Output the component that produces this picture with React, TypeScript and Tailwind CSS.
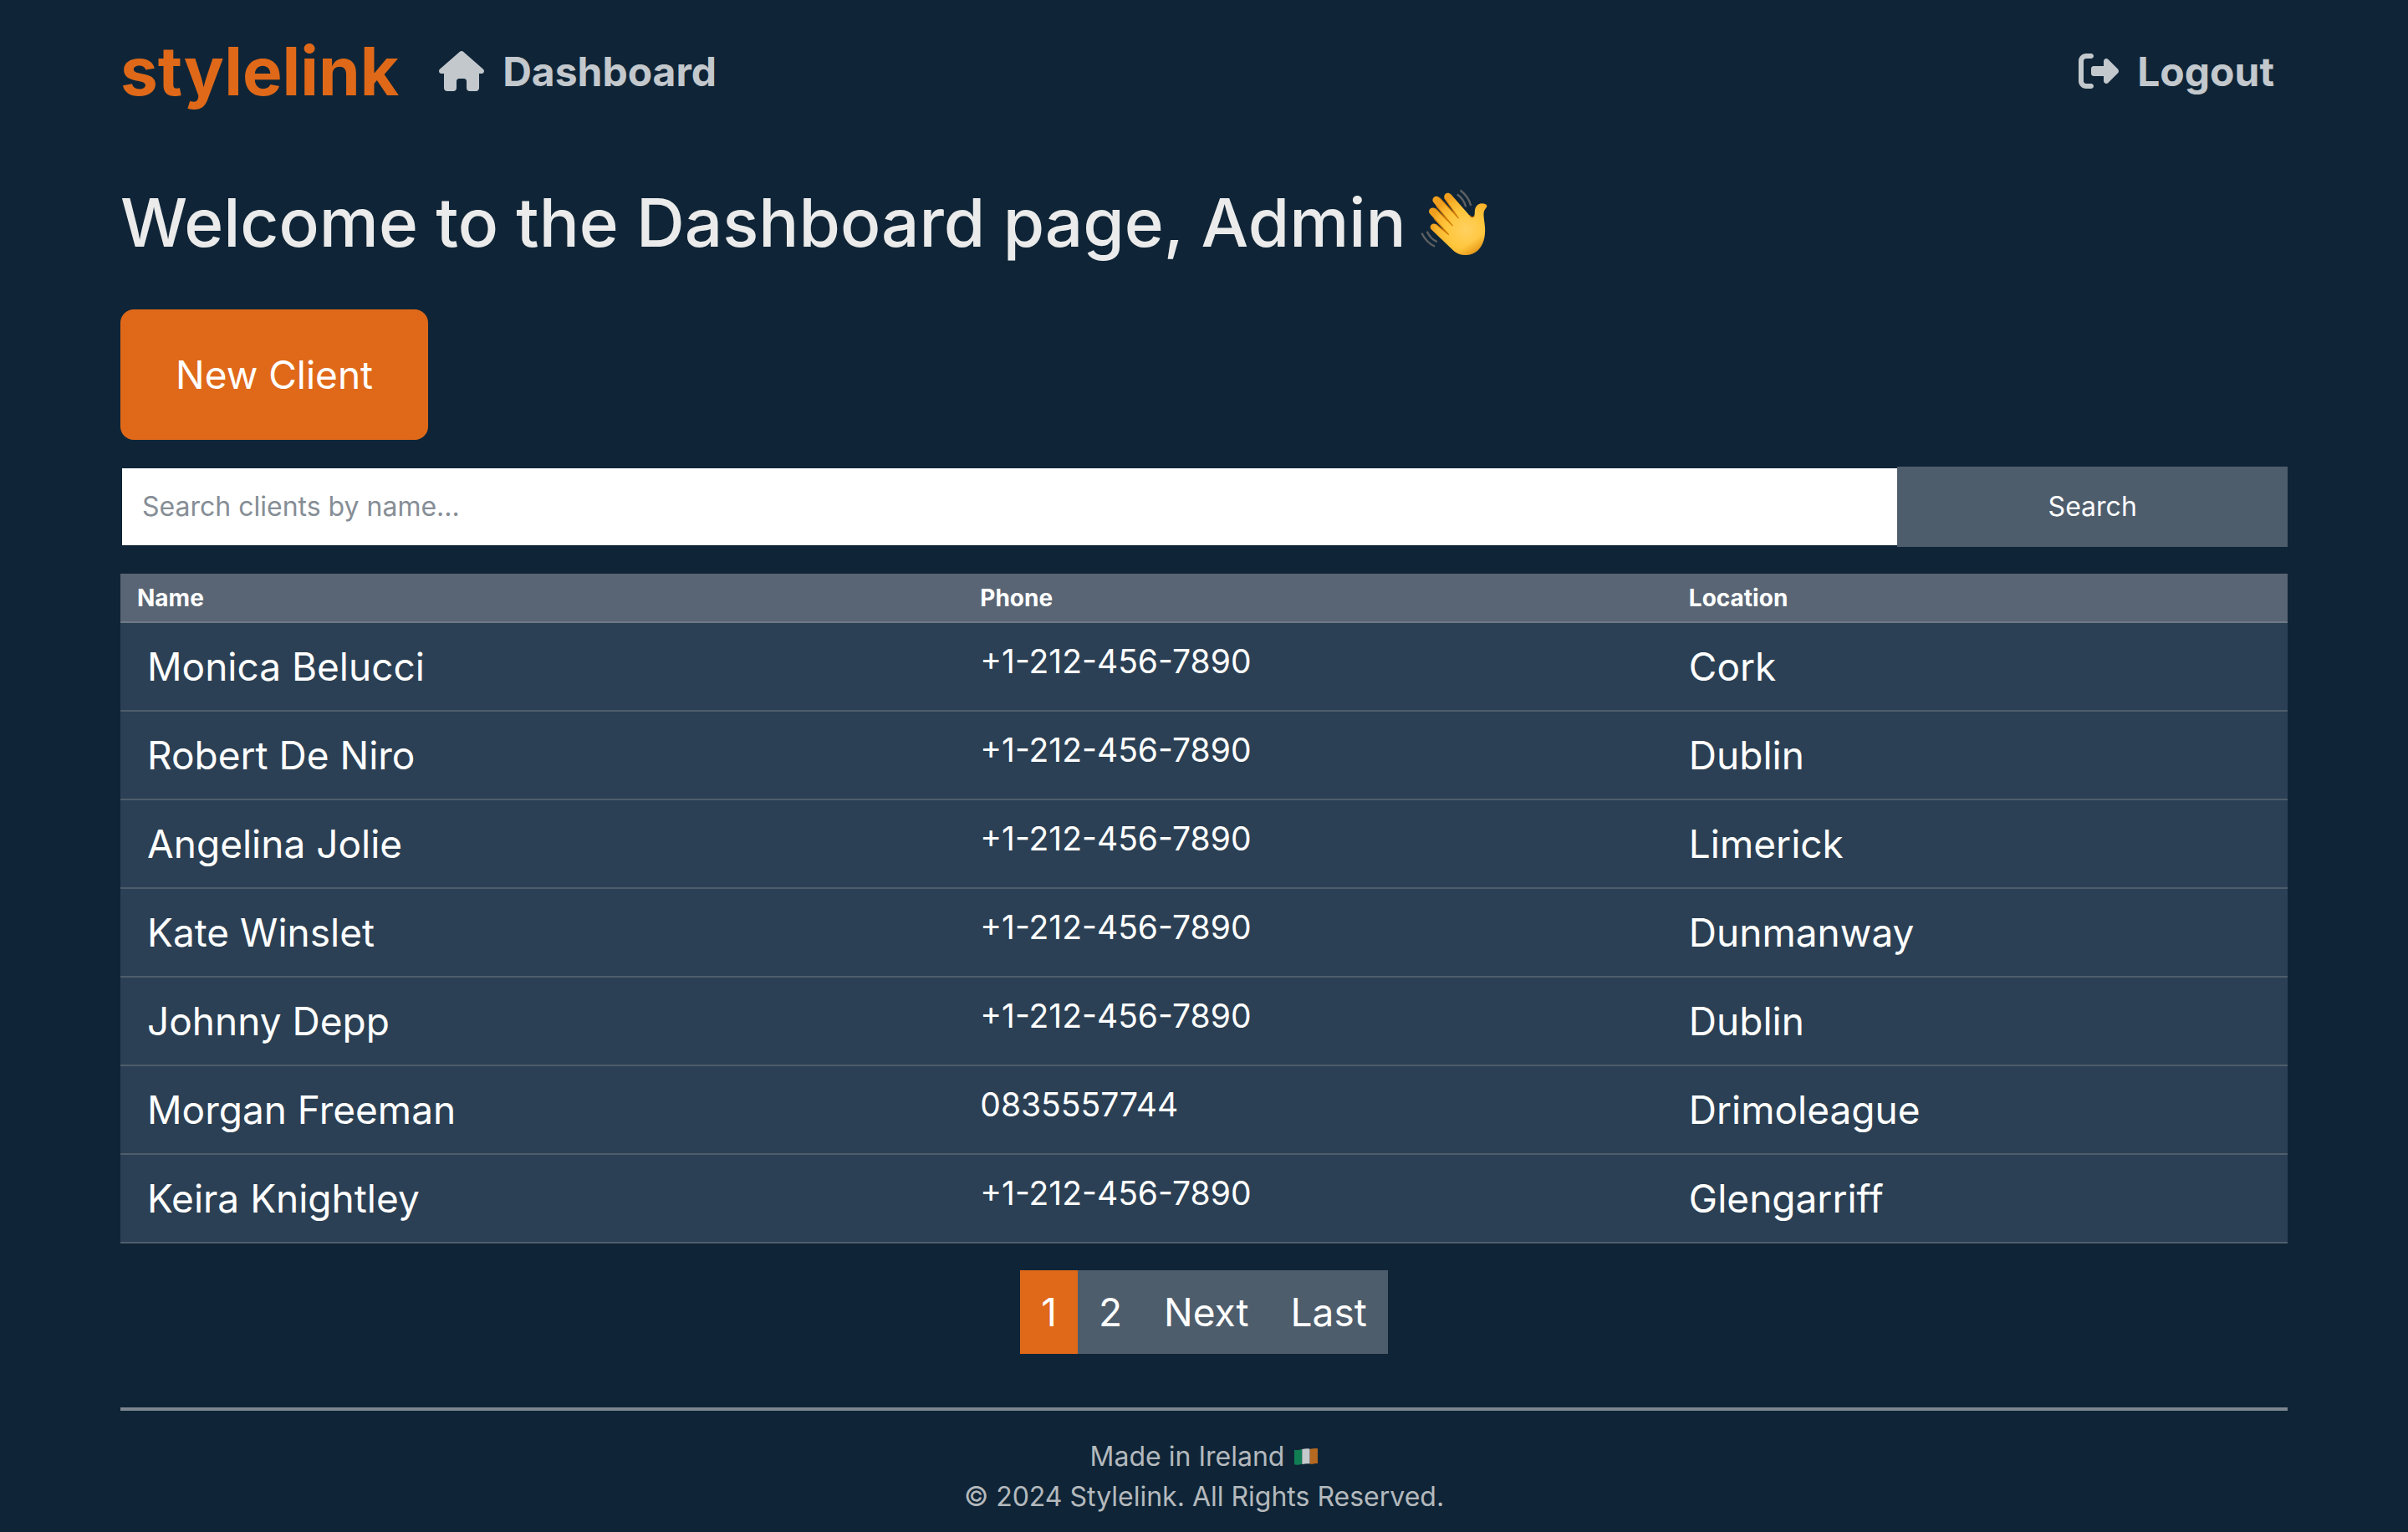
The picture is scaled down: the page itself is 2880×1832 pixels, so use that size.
import React from "react";
import { FaHouse, FaRightFromBracket } from "react-icons/fa6";

type Client = { name: string; phone: string; location: string };

const clients: Client[] = [
  { name: "Monica Belucci", phone: "+1-212-456-7890", location: "Cork" },
  { name: "Robert De Niro", phone: "+1-212-456-7890", location: "Dublin" },
  { name: "Angelina Jolie", phone: "+1-212-456-7890", location: "Limerick" },
  { name: "Kate Winslet", phone: "+1-212-456-7890", location: "Dunmanway" },
  { name: "Johnny Depp", phone: "+1-212-456-7890", location: "Dublin" },
  { name: "Morgan Freeman", phone: "0835557744", location: "Drimoleague" },
  { name: "Keira Knightley", phone: "+1-212-456-7890", location: "Glengarriff" },
];

const pages = ["1", "2", "Next", "Last"];

function WavingHand() {
  return (
    <svg viewBox="180 78 245 242" className="size-[82px] shrink-0" role="img" aria-label="Waving hand">
      <defs>
        <radialGradient id="palm" gradientUnits="userSpaceOnUse" cx="345" cy="225" r="125">
          <stop offset="0" stopColor="#ffd160" />
          <stop offset="0.55" stopColor="#ffc63c" />
          <stop offset="0.85" stopColor="#f9b42c" />
          <stop offset="1" stopColor="#f0a01e" />
        </radialGradient>
        <linearGradient id="edge" gradientUnits="userSpaceOnUse" x1="330" y1="230" x2="385" y2="312">
          <stop offset="0.5" stopColor="#e08a10" stopOpacity="0" />
          <stop offset="1" stopColor="#d87f0c" stopOpacity="0.75" />
        </linearGradient>
      </defs>
      <g fill="none" stroke="#5f6063" strokeWidth="7">
        <path d="M325 84C343 98 357 116 363 139" />
        <path d="M314 99C330 110 340 124 345 143" />
        <path d="M187 237C198 259 213 275 234 285" />
        <path d="M206 231C214 248 224 261 242 268" />
      </g>
      <path
        d="M269 113C262 100 279 86 292 99L358 174C364 181 370 183 374 177C379 168 374 157 380 145C387 131 403 129 414 133C423 137 421 143 415 150C403 166 411 185 413 215C416 252 406 289 378 306C354 320 325 319 303 302L221 224C211 212 226 196 240 207L283 243L216 168C206 154 223 139 238 151L298 211L228 126C220 112 238 98 251 111L319 184Z"
        fill="url(#palm)"
      />
      <path
        d="M413 215C416 252 406 289 378 306C354 320 325 319 303 302L270 270L370 190Z"
        fill="url(#edge)"
      />
      <g fill="none" stroke="#d27c08" strokeWidth="3.5" strokeLinecap="round">
        <path d="M251 111L319 184L269 113" />
        <path d="M238 151L298 211L240 141" />
        <path d="M240 207L284 243L232 186" />
        <path d="M358 174C365 182 371 183 375 176" />
      </g>
    </svg>
  );
}

function IrishFlag() {
  return (
    <svg viewBox="0 0 84 60" className="h-5 w-7 opacity-80" role="img" aria-label="Flag of Ireland">
      <path d="M0 5C10 8 19 5 28 3V56C19 58 10 61 0 58Z" fill="#12945b" />
      <path d="M28 3C37 1 47 0 56 2V55C47 54 37 55 28 57Z" fill="#f2f2f2" />
      <path d="M56 2C66 1 75 -1 84 1V54C75 53 66 57 56 56Z" fill="#e07a1c" />
    </svg>
  );
}

export default function App() {
  return (
    <div className="min-h-screen bg-[#0f2537] px-[5%] font-[Inter,sans-serif] text-[#ebebeb]">
      <nav className="flex items-center justify-between py-[25px] text-[48px] leading-[75px] font-bold text-[#c3c8cd]">
        <div className="flex items-center gap-12">
          <a href="#home" className="text-[80px] leading-[120px] text-[#df6919]">
            stylelink
          </a>
          <a href="#dashboard" className="flex items-center gap-[22px]">
            <FaHouse className="h-12 w-[54px]" />
            Dashboard
          </a>
        </div>
        <a href="#logout" className="mr-4 flex items-center gap-[22px]">
          <FaRightFromBracket className="size-12" />
          Logout
        </a>
      </nav>

      <main>
        <h1 className="mt-12 flex items-center gap-4 text-[80px] leading-[96px] font-medium">
          Welcome to the Dashboard page, Admin
          <WavingHand />
        </h1>

        <button
          type="button"
          className="mt-14 rounded-2xl bg-[#df6919] px-[66px] py-10 text-[46px] leading-[76px] text-white"
        >
          New Client
        </button>

        <form className="mt-8 flex h-24 text-[32px] leading-[48px]" onSubmit={(e) => e.preventDefault()}>
          <input
            type="text"
            aria-label="Search clients by name"
            placeholder="Search clients by name..."
            className="w-[82%] border-y-2 border-l-2 border-[#0f2537] bg-white px-6 text-[#0f2537] placeholder:text-[#868e96]"
          />
          <button type="submit" className="w-[18%] bg-[#4e5d6c] text-white">
            Search
          </button>
        </form>

        <table className="mt-8 w-full table-fixed border-collapse text-left text-white">
          <colgroup>
            <col className="w-[38.9%]" />
            <col className="w-[32.7%]" />
            <col />
          </colgroup>
          <thead>
            <tr className="h-[58px] border-b-2 border-[#6f7a87] bg-[#596574] text-[28px] leading-[44px] font-bold">
              <th className="px-5">Name</th>
              <th className="px-5">Phone</th>
              <th className="px-5">Location</th>
            </tr>
          </thead>
          <tbody>
            {clients.map((c) => (
              <tr key={c.name} className="h-[106px] border-b-2 border-[#4e5d6c] bg-[#2b4054] align-top text-[46px] leading-[76px]">
                <td className="py-3.5 pr-5 pl-8">
                  <a href="#client">{c.name}</a>
                </td>
                <td className="px-5 py-3.5 text-[39px] leading-[64px]">{c.phone}</td>
                <td className="px-5 py-3.5">{c.location}</td>
              </tr>
            ))}
          </tbody>
        </table>

        <div className="mt-8 flex justify-center text-[46px] leading-[76px] text-white" role="navigation" aria-label="Pages">
          {pages.map((p, i) => (
            <a key={p} href="#page" className={i === 0 ? "bg-[#df6919] px-[25px] py-3" : "bg-[#4e5d6c] px-[25px] py-3"}>
              {p}
            </a>
          ))}
        </div>
      </main>

      <footer className="mt-16 border-t-4 border-[#7d868f] pt-[31px] text-center text-[32px] leading-[48px] text-[#b4b9bd]">
        <p className="flex items-center justify-center gap-3">
          Made in Ireland <IrishFlag />
        </p>
        <p>© 2024 Stylelink. All Rights Reserved.</p>
      </footer>
    </div>
  );
}
